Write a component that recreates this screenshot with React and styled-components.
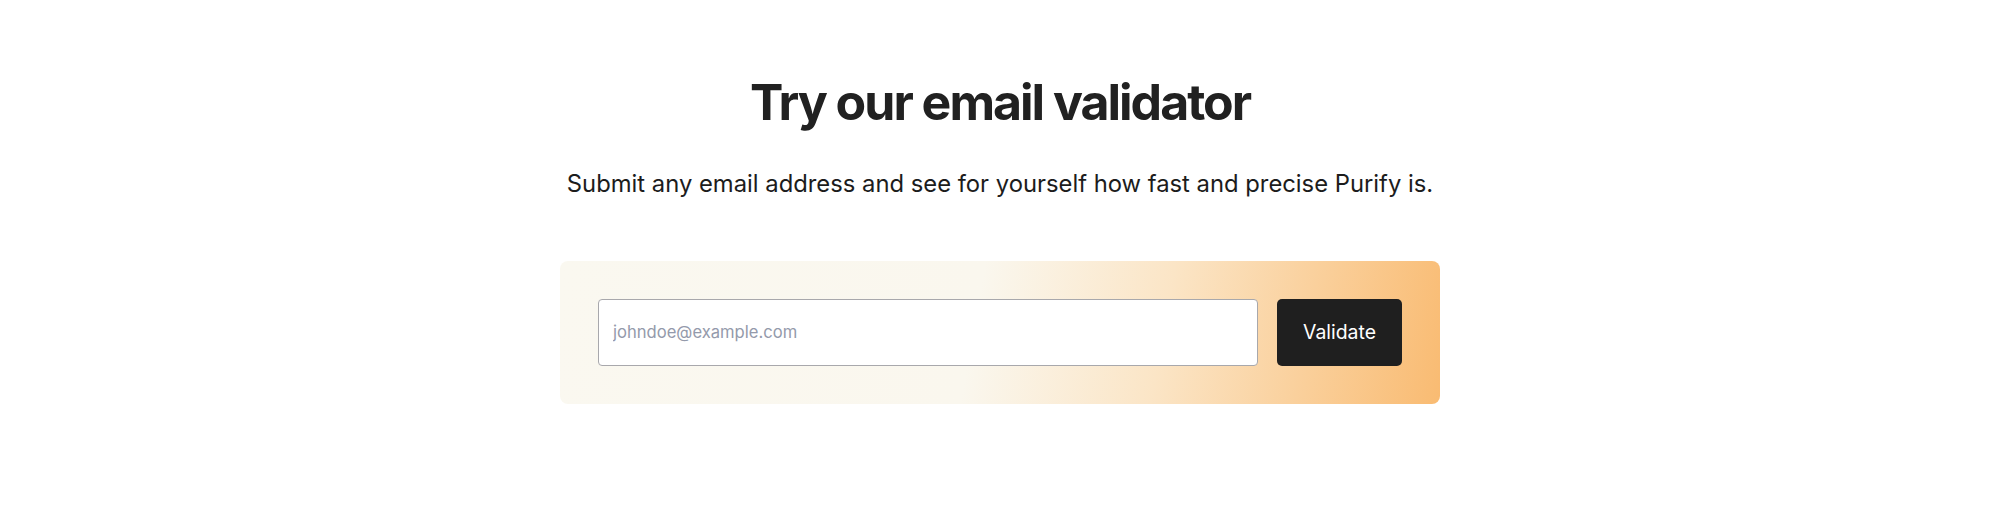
import React, { useState } from 'react'
import styled, { createGlobalStyle } from 'styled-components'

const GlobalStyle = createGlobalStyle`
    * {
        box-sizing: border-box;
    }
    body {
        margin: 0;
        background: #fff;
        font-family: Inter, "Noto Sans", sans-serif;
        color: #212121;
    }
`

const App = () => {
    const [email, setEmail] = useState('')

    return (
        <>
            <GlobalStyle />
            <StyleSection>
                <h2 className="title">Try our email validator</h2>
                <p className="lead">
                    Submit any email address and see for yourself how fast and precise Purify is.
                </p>

                <Card onSubmit={e => e.preventDefault()}>
                    <EmailInput
                        type="email"
                        placeholder="johndoe@example.com"
                        value={email}
                        onChange={e => setEmail(e.target.value)}
                    />
                    <ValidateButton type="submit">Validate</ValidateButton>
                </Card>
            </StyleSection>
        </>
    )
}

const StyleSection = styled.section`
    width: 100%;
    display: flex;
    flex-direction: column;
    align-items: center;
    padding-top: 72px;

    .title {
        margin: 0;
        font-size: 50px;
        line-height: 1.2;
        font-weight: 700;
        letter-spacing: -0.04em;
        color: #212121;
    }

    .lead {
        margin: 34px 0 0;
        font-size: 23.8px;
        line-height: 1.5;
        color: #1c1c1c;
    }
`

const Card = styled.form`
    width: 880px;
    margin-top: 59px;
    padding: 38px;
    display: flex;
    gap: 19px;
    border-radius: 8px;
    background: linear-gradient(100deg, #faf8f0 0%, #faf7ee 47%, #fbe5c6 68%, #f9bb72 100%);
`

const EmailInput = styled.input`
    flex: 1;
    height: 67px;
    padding: 0 14px;
    font-family: Inter, "Noto Sans", sans-serif;
    font-size: 16.6px;
    color: #212121;
    background: #fff;
    border: 1px solid #a8a8ac;
    border-radius: 4px;
    outline: none;

    &::placeholder {
        color: #949aab;
    }
`

const ValidateButton = styled.button`
    width: 125px;
    height: 67px;
    font-family: Inter, "Noto Sans", sans-serif;
    font-size: 19.4px;
    color: #fff;
    background: #1f1f1f;
    border: none;
    border-radius: 5px;
    cursor: pointer;
`

export default App
